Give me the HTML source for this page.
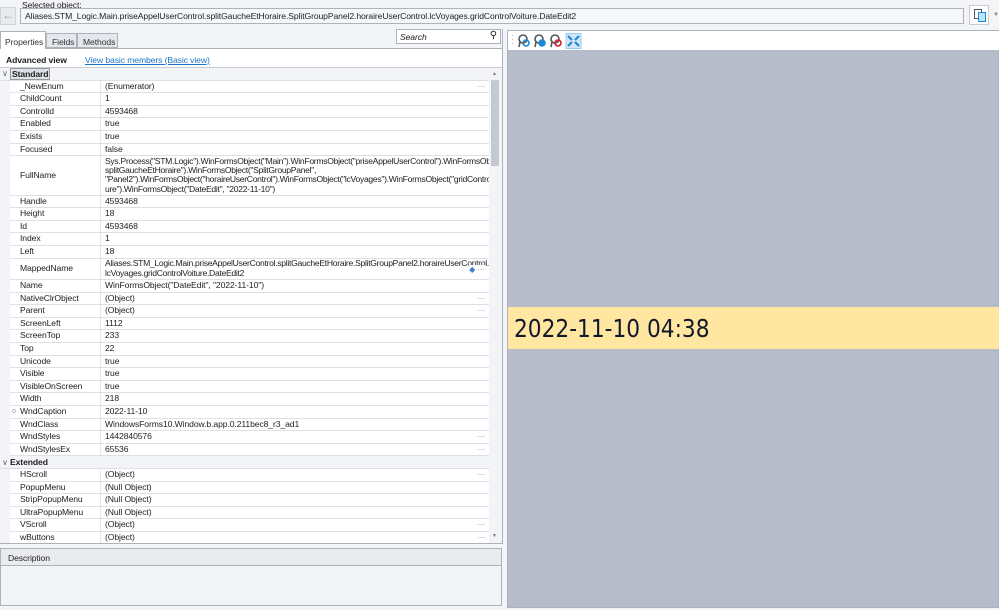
<!DOCTYPE html>
<html><head><meta charset="utf-8"><style>
*{margin:0;padding:0;box-sizing:border-box}
body{width:999px;height:610px;overflow:hidden;background:#f3f4f7;font-family:"Liberation Sans",sans-serif;font-size:8.6px;color:#1e1e1e;position:relative;letter-spacing:-0.1px}
.abs{position:absolute}
.rows{position:absolute;left:0;top:68px;width:489px;height:475px;overflow:hidden;background:#f3f4f7}
.r{position:relative;height:12.6px;border-bottom:1px solid #dde0e6;background:#fff;margin-left:10px;display:flex;align-items:center;white-space:nowrap}
.r .l{width:91px;flex-shrink:0;padding-left:10px;height:100%;display:flex;align-items:center;border-right:1px solid #e6e8ec;line-height:9.4px}
.r .v{padding-left:4px;line-height:9.4px}
.r .d{position:absolute;right:4px;top:1px;color:#888;font-size:8px}
.h{height:12.6px;display:flex;align-items:center;font-weight:bold;background:#f3f4f7;border-bottom:1px solid #dde0e6}
.h i{font-style:normal;font-weight:normal;width:10px;text-align:center;color:#666;font-size:8px}
.t{letter-spacing:-0.3px}
</style></head><body>
<div class="abs" style="left:22px;top:0;font-size:8.6px">Selected object:</div>
<div class="abs" style="left:0;top:7px;width:16px;height:18px;background:#e8eaee;border:1px solid #d0d3d9;color:#999;font-size:12px;text-align:center;line-height:15px">&#8592;</div>
<div class="abs" style="left:20px;top:8px;width:944px;height:16px;background:#f6f7f9;border:1px solid #aeb3bb;padding-left:4px;line-height:14px">Aliases.STM_Logic.Main.priseAppelUserControl.splitGaucheEtHoraire.SplitGroupPanel2.horaireUserControl.lcVoyages.gridControlVoiture.DateEdit2</div>
<div class="abs" style="left:969px;top:5px;width:20px;height:20px;background:#fff;border:1px solid #ccc"><div class="abs" style="left:4px;top:3px;width:8px;height:10px;border:1px solid #555;background:#fff"></div><div class="abs" style="left:8px;top:6px;width:8px;height:10px;border:1px solid #1e88d8;background:#bfe3fb"></div></div>
<div class="abs" style="left:993px;top:12px;color:#888;font-size:6px">&#9660;</div>

<div class="abs" style="left:0;top:48px;width:503px;height:1px;background:#aeb3bb"></div>
<div class="abs" style="left:0;top:31px;width:46px;height:18px;background:#fff;border:1px solid #aeb3bb;border-bottom:none;padding:5px 0 0 4px;color:#333">Properties</div>
<div class="abs" style="left:46px;top:33px;width:31px;height:15px;background:#e4e7ec;border:1px solid #aeb3bb;padding:3px 0 0 5px;color:#333">Fields</div>
<div class="abs" style="left:77px;top:33px;width:41px;height:15px;background:#e4e7ec;border:1px solid #aeb3bb;padding:3px 0 0 5px;color:#333">Methods</div>
<div class="abs" style="left:396px;top:29px;width:105px;height:15px;background:#fff;border:1px solid #aeb3bb;padding:2px 0 0 3px;font-style:italic">Search<span class="abs" style="right:3px;top:0;font-style:normal;font-size:10px">&#9906;</span></div>
<div class="abs" style="left:0;top:49px;width:503px;height:19px;background:#fff;border-right:1px solid #aeb3bb"></div>
<div class="abs" style="left:6px;top:55px;font-weight:bold">Advanced view</div>
<div class="abs" style="left:85px;top:55px;color:#1a73c8;text-decoration:underline">View basic members (Basic view)</div>
<div class="abs" style="left:0;top:67px;width:503px;height:1px;background:#c8ccd3"></div>

<div class="rows">
<div class="h"><i>&#8744;</i><span style="background:#dde0e6;border:1px solid #999;padding:0 1px">Standard</span></div>
<div class="r"><div class="l">_NewEnum</div><div class="v">(Enumerator)</div><span class="d">···</span></div>
<div class="r"><div class="l">ChildCount</div><div class="v">1</div></div>
<div class="r"><div class="l">ControlId</div><div class="v">4593468</div></div>
<div class="r"><div class="l">Enabled</div><div class="v">true</div></div>
<div class="r"><div class="l">Exists</div><div class="v">true</div></div>
<div class="r"><div class="l">Focused</div><div class="v">false</div></div>
<div class="r" style="height:39.4px"><div class="l">FullName</div><div class="v t">Sys.Process("STM.Logic").WinFormsObject("Main").WinFormsObject("priseAppelUserControl").WinFormsObject("<br>splitGaucheEtHoraire").WinFormsObject("SplitGroupPanel",<br>"Panel2").WinFormsObject("horaireUserControl").WinFormsObject("lcVoyages").WinFormsObject("gridControlVoit<br>ure").WinFormsObject("DateEdit", "2022-11-10")</div></div>
<div class="r"><div class="l">Handle</div><div class="v">4593468</div></div>
<div class="r"><div class="l">Height</div><div class="v">18</div></div>
<div class="r"><div class="l">Id</div><div class="v">4593468</div></div>
<div class="r"><div class="l">Index</div><div class="v">1</div></div>
<div class="r"><div class="l">Left</div><div class="v">18</div></div>
<div class="r" style="height:21.5px"><div class="l">MappedName</div><div class="v t">Aliases.STM_Logic.Main.priseAppelUserControl.splitGaucheEtHoraire.SplitGroupPanel2.horaireUserControl.<br>lcVoyages.gridControlVoiture.DateEdit2</div><span class="d" style="top:6px;background:#fff"><span style="color:#3b82d6">&#9670;</span> ···</span></div>
<div class="r"><div class="l">Name</div><div class="v">WinFormsObject("DateEdit", "2022-11-10")</div></div>
<div class="r"><div class="l">NativeClrObject</div><div class="v">(Object)</div><span class="d">···</span></div>
<div class="r"><div class="l">Parent</div><div class="v">(Object)</div><span class="d">···</span></div>
<div class="r"><div class="l">ScreenLeft</div><div class="v">1112</div></div>
<div class="r"><div class="l">ScreenTop</div><div class="v">233</div></div>
<div class="r"><div class="l">Top</div><div class="v">22</div></div>
<div class="r"><div class="l">Unicode</div><div class="v">true</div></div>
<div class="r"><div class="l">Visible</div><div class="v">true</div></div>
<div class="r"><div class="l">VisibleOnScreen</div><div class="v">true</div></div>
<div class="r"><div class="l">Width</div><div class="v">218</div></div>
<div class="r"><div class="l"><span class="abs" style="left:2px;color:#999;font-size:7px">o</span>WndCaption</div><div class="v">2022-11-10</div></div>
<div class="r"><div class="l">WndClass</div><div class="v">WindowsForms10.Window.b.app.0.211bec8_r3_ad1</div></div>
<div class="r"><div class="l">WndStyles</div><div class="v">1442840576</div><span class="d">···</span></div>
<div class="r"><div class="l">WndStylesEx</div><div class="v">65536</div><span class="d">···</span></div>
<div class="h"><i>&#8744;</i>Extended</div>
<div class="r"><div class="l">HScroll</div><div class="v">(Object)</div><span class="d">···</span></div>
<div class="r"><div class="l">PopupMenu</div><div class="v">(Null Object)</div></div>
<div class="r"><div class="l">StripPopupMenu</div><div class="v">(Null Object)</div></div>
<div class="r"><div class="l">UltraPopupMenu</div><div class="v">(Null Object)</div></div>
<div class="r"><div class="l">VScroll</div><div class="v">(Object)</div><span class="d">···</span></div>
<div class="r"><div class="l">wButtons</div><div class="v">(Object)</div><span class="d">···</span></div>
</div>
<div class="abs" style="left:489px;top:68px;width:12px;height:475px;background:#f3f4f7"></div>
<div class="abs" style="left:491px;top:80px;width:8px;height:86px;background:#c3c8d1"></div>
<div class="abs" style="left:492px;top:71px;color:#777;font-size:5px">&#9650;</div>
<div class="abs" style="left:492px;top:533px;color:#777;font-size:5px">&#9660;</div>
<div class="abs" style="left:502px;top:29px;width:1px;height:515px;background:#aeb3bb"></div>
<div class="abs" style="left:0;top:543px;width:503px;height:1px;background:#aeb3bb"></div>
<div class="abs" style="left:0;top:548px;width:502px;height:58px;border:1px solid #aeb3bb;background:#f3f4f7"></div>
<div class="abs" style="left:0;top:548px;width:502px;height:18px;border:1px solid #aeb3bb;background:#e9ebef;padding:4px 0 0 7px">Description</div>

<div class="abs" style="left:507px;top:30px;width:492px;height:578px;border:1px solid #aeb3bb;background:#b6bcc9"></div>
<div class="abs" style="left:508px;top:31px;width:491px;height:19px;background:#fff"></div>
<div class="abs" style="left:511px;top:34px;color:#999;font-size:8px;line-height:4px">·<br>·<br>·</div>
<svg class="abs" style="left:517px;top:33px" width="70" height="16" viewBox="0 0 70 16">
<g fill="none" stroke-width="1.6"><circle cx="6" cy="6" r="4" stroke="#555"/><path d="M3 9 L2 14" stroke="#555"/><circle cx="9" cy="10" r="3" stroke="#1e88d8"/>
<circle cx="22" cy="6" r="4" stroke="#555"/><path d="M19 9 L18 14" stroke="#555"/><circle cx="25" cy="10" r="3" stroke="#1e88d8" fill="#1e88d8"/>
<circle cx="38" cy="6" r="4" stroke="#555"/><path d="M35 9 L34 14" stroke="#555"/><circle cx="41" cy="10" r="3" stroke="#d8182a"/></g>
<rect x="49" y="0.5" width="15" height="15" fill="#d3e7f7" stroke="#9ccbee"/>
<path d="M51 3 L55 7 M62 3 L58 7 M51 13 L55 9 M62 13 L58 9" stroke="#1e88d8" stroke-width="2.2"/>
</svg>
<div class="abs" style="left:508px;top:307px;width:491px;height:42px;background:#ffe6a1"></div>
<div class="abs" style="left:514px;top:314px;font-size:25px;color:#13182c;letter-spacing:0;font-family:'DejaVu Sans Condensed','Liberation Sans',sans-serif;transform:scaleX(0.965);transform-origin:left">2022-11-10 04:38</div>
</body></html>
